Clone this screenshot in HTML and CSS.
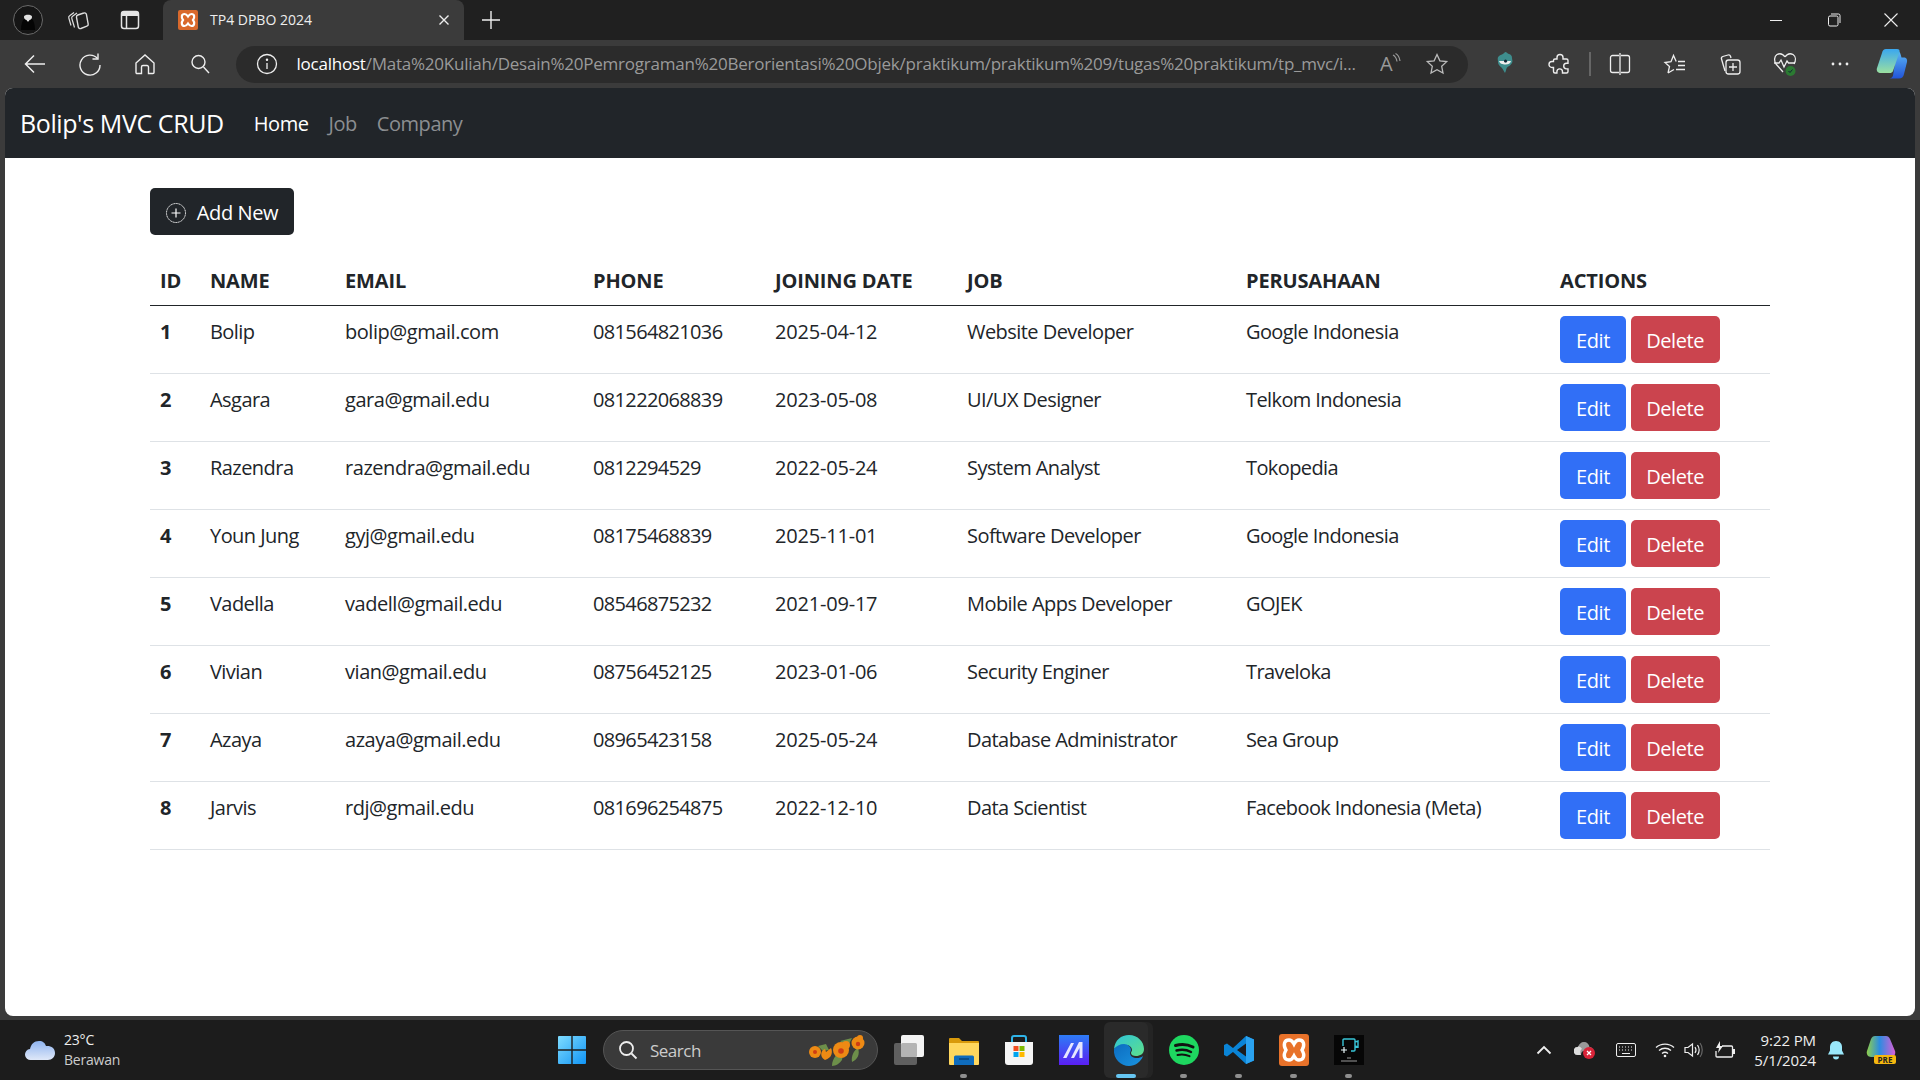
FILE: index.html
```html
<!DOCTYPE html>
<html lang="en">
<head>
    <meta charset="UTF-8">
    <meta name="viewport" content="width=device-width, initial-scale=1.0">
    <title>TP4 DPBO 2024</title>
    <link rel="stylesheet" href="styles.css">
</head>
<body>
    <!-- Browser tab strip -->
    <div class="tabstrip">
        <span class="avatar">
            <svg width="30" height="30" viewBox="0 0 30 30"><circle cx="15" cy="15" r="14.500" fill="#151515" stroke="#6a6a6a" stroke-width="1"/><path d="M8 25c0-5 1-9 3-11h8c2 2 3 6 3 11z" fill="#050505"/><path d="M11 11.500c.5-2.500 7.500-2.500 8 0 .3 2-1.500 3.500-2.500 3.500l-1 1.500h-1l-1-1.500c-1 0-2.800-1.500-2.500-3.500z" fill="#e2e2e2"/></svg>
        </span>
        <span class="strip-btn">
            <svg width="24" height="24" viewBox="0 0 24 24" fill="none" stroke="#ddd" stroke-width="1.200"><path d="M5 17.500 2.800 10a2 2 0 0 1 .8-2.300L8 4.500"/><path d="M8.500 19.500 5.800 10.500a2 2 0 0 1 .8-2.300L11 5"/><path d="M10.500 9.300a2 2 0 0 1 1.300-2.300l6-2a2 2 0 0 1 2.600 1.300l1.800 9.700a2 2 0 0 1-1.300 2.200l-6 2.300a2 2 0 0 1-2.600-1.400z" stroke-width="1.400"/></svg>
        </span>
        <span class="strip-btn">
            <svg width="24" height="24" viewBox="0 0 24 24" fill="none" stroke="#e4e4e4" stroke-width="1.500"><rect x="3.500" y="3.500" width="17" height="17" rx="2.500"/><path d="M3.500 5.500a2 2 0 0 1 2-2h13a2 2 0 0 1 2 2v2.500h-17z" fill="#e4e4e4" stroke="none"/><path d="M8.500 8v12.500"/></svg>
        </span>
        <div class="tab">
            <svg class="favicon" width="20" height="20" viewBox="0 0 20 20"><rect width="20" height="20" rx="2" fill="#d9692c"/><path d="M6.500 4c-3 0-3.500 3.300-1.500 6-2 2.700-1.500 6 1.500 6 1.700 0 2.700-1.300 3.500-2.500.8 1.200 1.800 2.500 3.500 2.500 3 0 3.500-3.300 1.500-6 2-2.700 1.500-6-1.500-6-1.700 0-2.700 1.300-3.500 2.500C9.200 5.300 8.200 4 6.500 4z" fill="none" stroke="#fff" stroke-width="2.200"/></svg>
            <span class="tab-title">TP4 DPBO 2024</span>
            <svg class="tab-close" width="12" height="12" viewBox="0 0 12 12" stroke="#eee" stroke-width="1.400"><path d="M1.500 1.500l9 9M10.500 1.500l-9 9"/></svg>
        </div>
        <svg class="new-tab" width="20" height="20" viewBox="0 0 20 20" stroke="#eee" stroke-width="1.400"><path d="M10 1v18M1 10h18"/></svg>
        <div class="window-btns">
            <svg width="14" height="14" viewBox="0 0 14 14" stroke="#eee"><path d="M1 7.500h12"/></svg>
            <svg width="14" height="14" viewBox="0 0 14 14" fill="none" stroke="#eee"><rect x="1.500" y="3" width="9.500" height="10" rx="1.500"/><path d="M4 1h7.500A1.500 1.500 0 0 1 13 2.500V10"/></svg>
            <svg width="14" height="14" viewBox="0 0 14 14" stroke="#eee" stroke-width="1.100"><path d="M.5.500l13 13M13.500.500l-13 13"/></svg>
        </div>
    </div>

    <!-- Address bar and toolbar -->
    <div class="toolbar">
        <span class="tool-btn">
            <svg width="24" height="24" viewBox="0 0 24 24" fill="none" stroke="#eee" stroke-width="1.500"><path d="M22 12H3M11 3.500 2.500 12l8.500 8.500"/></svg>
        </span>
        <span class="tool-btn">
            <svg width="24" height="24" viewBox="0 0 24 24" fill="none" stroke="#eee" stroke-width="1.400"><path d="M19.500 6.500A10 10 0 1 0 22 13"/><path d="M20 1.500v5.500h-5.500"/></svg>
        </span>
        <span class="tool-btn">
            <svg width="24" height="24" viewBox="0 0 24 24" fill="none" stroke="#eee" stroke-width="1.400"><path d="M3 11 12 3l9 8v9.500a1 1 0 0 1-1 1h-4.500V15a1.500 1.500 0 0 0-1.500-1.500h-4A1.500 1.500 0 0 0 8.500 15v6.500H4a1 1 0 0 1-1-1z"/></svg>
        </span>
        <span class="tool-btn">
            <svg width="22" height="22" viewBox="0 0 22 22" fill="none" stroke="#eee" stroke-width="1.400"><circle cx="9.500" cy="9" r="6.500"/><path d="M14.500 14l5.500 6"/></svg>
        </span>
        <div class="addressbar">
            <svg width="22" height="22" viewBox="0 0 22 22" fill="none" stroke="#eee" stroke-width="1.300"><circle cx="11" cy="11" r="9.500"/><path d="M11 10v6"/><circle cx="11" cy="6.800" r=".6" fill="#eee"/></svg>
            <span class="url"><span class="url-host">localhost</span>/Mata%20Kuliah/Desain%20Pemrograman%20Berorientasi%20Objek/praktikum/praktikum%209/tugas%20praktikum/tp_mvc/i...</span>
            <svg class="read-aloud" width="30" height="30" viewBox="0 0 30 30" fill="none" stroke="#999" stroke-width="1.200"><text x="0" y="22" font-family="Open Sans" font-size="20" fill="#999" stroke="none">A</text><path d="M13 6c2.500 1.300 3.500 3.500 4 6.500M15.500 4.500c3 1.500 4 4 4.500 7.500"/></svg>
            <svg width="24" height="24" viewBox="0 0 24 24" fill="none" stroke="#bbb" stroke-width="1.300"><path d="M12 2.500l2.900 6.300 6.800.8-5 4.700 1.300 6.800-6-3.400-6 3.400 1.300-6.800-5-4.700 6.800-.8z"/></svg>
        </div>
        <span class="tool-btn first-ext">
            <svg width="20" height="26" viewBox="0 0 20 26"><path d="M10 1c2 0 2 1.500 4 2 2 .5 3 2 3 4s1 3 0 5-3 3-4.500 4-1 3-2.500 6c-1.500-2-2-4-3.500-5.500S3 14 3 11s-1-4 1-6 4-1 6-4z" fill="#3e8d8d"/><path d="M4 10h5a1.800 1.800 0 0 0 3.500 0H16c-.5 2.500-2.500 3.500-5.500 3.500S4.500 12.500 4 10z" fill="#eee"/><circle cx="10.500" cy="10" r="1.500" fill="#123"/></svg>
        </span>
        <span class="tool-btn">
            <svg width="24" height="24" viewBox="0 0 24 24" fill="none" stroke="#eee" stroke-width="1.400"><path d="M9 5.500a3 3 0 0 1 6 0V7h3.500a1.500 1.500 0 0 1 1.500 1.500v2.800h-1.500a2.800 2.800 0 0 0 0 5.600H20v2.600a1.500 1.500 0 0 1-1.500 1.500h-4v-1.300a2.800 2.800 0 0 0-5.600 0v1.300H7a1.500 1.500 0 0 1-1.500-1.500v-4H4a3 3 0 0 1 0-6h1.500V8.500A1.500 1.500 0 0 1 7 7h2z"/></svg>
        </span>
        <span class="tool-divider"></span>
        <span class="tool-btn">
            <svg width="24" height="24" viewBox="0 0 24 24" fill="none" stroke="#eee" stroke-width="1.300"><path d="M11 3.500H4.500A2 2 0 0 0 2.500 5.500v13a2 2 0 0 0 2 2H11M13 3.500h6.500a2 2 0 0 1 2 2v13a2 2 0 0 1-2 2H13M12 1v22"/></svg>
        </span>
        <span class="tool-btn">
            <svg width="24" height="24" viewBox="0 0 24 24" fill="none" stroke="#eee" stroke-width="1.300"><path d="M5 21l1.500-6.500L2 10.500l6-.8L10.500 3.500l2.700 6M5 21l6-3.500"/><path d="M15 9.500h7M15 13.500h7M13 17.500h9"/></svg>
        </span>
        <span class="tool-btn">
            <svg width="24" height="24" viewBox="0 0 24 24" fill="none" stroke="#eee" stroke-width="1.300"><path d="M7 19 3.500 7a2 2 0 0 1 1.300-2.500L10 3a2 2 0 0 1 2.500 1.300L13 6"/><rect x="8" y="8" width="14" height="14" rx="2.500"/><path d="M15 11v8M11 15h8"/></svg>
        </span>
        <span class="tool-btn">
            <svg width="26" height="26" viewBox="0 0 26 26" fill="none" stroke="#eee" stroke-width="1.300"><path d="M13 6c-2-3-5-4-8-2.500C2 5.500 2 10 4 13l7 8"/><path d="M13 6c2-3 5-4 8-2.500 3 2 3 6 1 9.500"/><path d="M2 12h5l2-3 3 7 3-6 1.500 2H23"/><circle cx="18.500" cy="20" r="5" fill="#2b7a32" stroke="none"/><path d="M16.500 20l1.500 1.500 2.500-3" stroke="#123" stroke-width="1"/></svg>
        </span>
        <span class="tool-btn">
            <svg width="18" height="6" viewBox="0 0 18 6" fill="#eee"><circle cx="2" cy="3" r="1.400"/><circle cx="9" cy="3" r="1.400"/><circle cx="16" cy="3" r="1.400"/></svg>
        </span>
        <span class="tool-copilot">
            <svg width="32" height="32" viewBox="0 0 32 32">
                <defs>
                    <linearGradient id="cp1" x1="0" y1="0" x2="0" y2="1"><stop offset="0" stop-color="#3aa7f0"/><stop offset="1" stop-color="#9be0a0"/></linearGradient>
                    <linearGradient id="cp2" x1="0" y1="0" x2="0" y2="1"><stop offset="0" stop-color="#5cb8f5"/><stop offset="1" stop-color="#2254d8"/></linearGradient>
                </defs>
                <path d="M21 3c2 0 3 1 3.500 3l1 3.500h2c3 0 4 2 3.500 4.500l-3 12c-.5 3-2.500 4.500-5 4.500H13c2 0 3.500-1 4-3z" fill="url(#cp2)"/>
                <path d="M10 1h11c2 0 3 1 2.500 3L17 23c-.5 1.500-2 2-3 2H5c-3 0-5-2-4-5l5-15c.5-2.500 2-4 4-4z" fill="url(#cp1)"/>
            </svg>
        </span>
    </div>

    <!-- The page itself -->
    <div class="page-frame">
        <div class="page">
            <nav class="navbar">
                <a class="navbar-brand">Bolip's MVC CRUD</a>
                <a class="nav-link active">Home</a>
                <a class="nav-link">Job</a>
                <a class="nav-link">Company</a>
            </nav>
            <main class="content">
                <a class="btn btn-dark">
                    <svg width="20" height="20" viewBox="0 0 20 20" fill="none" stroke="#fff"><circle cx="10" cy="10" r="9.500" stroke-dasharray="1.200 .5"/><path d="M10 5.500v9M5.500 10h9" stroke-width="1.200"/></svg>
                    Add New
                </a>
                <table class="table">
                    <thead>
                        <tr>
                            <th>ID</th>
                            <th>NAME</th>
                            <th>EMAIL</th>
                            <th>PHONE</th>
                            <th>JOINING DATE</th>
                            <th>JOB</th>
                            <th>PERUSAHAAN</th>
                            <th>ACTIONS</th>
                        </tr>
                    </thead>
                    <tbody>
                        <tr>
                            <th>1</th><td>Bolip</td><td>bolip@gmail.com</td><td>081564821036</td><td>2025-04-12</td><td>Website Developer</td><td>Google Indonesia</td>
                            <td><a class="btn btn-primary">Edit</a> <a class="btn btn-danger">Delete</a></td>
                        </tr>
                        <tr>
                            <th>2</th><td>Asgara</td><td>gara@gmail.edu</td><td>081222068839</td><td>2023-05-08</td><td>UI/UX Designer</td><td>Telkom Indonesia</td>
                            <td><a class="btn btn-primary">Edit</a> <a class="btn btn-danger">Delete</a></td>
                        </tr>
                        <tr>
                            <th>3</th><td>Razendra</td><td>razendra@gmail.edu</td><td>0812294529</td><td>2022-05-24</td><td>System Analyst</td><td>Tokopedia</td>
                            <td><a class="btn btn-primary">Edit</a> <a class="btn btn-danger">Delete</a></td>
                        </tr>
                        <tr>
                            <th>4</th><td>Youn Jung</td><td>gyj@gmail.edu</td><td>08175468839</td><td>2025-11-01</td><td>Software Developer</td><td>Google Indonesia</td>
                            <td><a class="btn btn-primary">Edit</a> <a class="btn btn-danger">Delete</a></td>
                        </tr>
                        <tr>
                            <th>5</th><td>Vadella</td><td>vadell@gmail.edu</td><td>08546875232</td><td>2021-09-17</td><td>Mobile Apps Developer</td><td>GOJEK</td>
                            <td><a class="btn btn-primary">Edit</a> <a class="btn btn-danger">Delete</a></td>
                        </tr>
                        <tr>
                            <th>6</th><td>Vivian</td><td>vian@gmail.edu</td><td>08756452125</td><td>2023-01-06</td><td>Security Enginer</td><td>Traveloka</td>
                            <td><a class="btn btn-primary">Edit</a> <a class="btn btn-danger">Delete</a></td>
                        </tr>
                        <tr>
                            <th>7</th><td>Azaya</td><td>azaya@gmail.edu</td><td>08965423158</td><td>2025-05-24</td><td>Database Administrator</td><td>Sea Group</td>
                            <td><a class="btn btn-primary">Edit</a> <a class="btn btn-danger">Delete</a></td>
                        </tr>
                        <tr>
                            <th>8</th><td>Jarvis</td><td>rdj@gmail.edu</td><td>081696254875</td><td>2022-12-10</td><td>Data Scientist</td><td>Facebook Indonesia (Meta)</td>
                            <td><a class="btn btn-primary">Edit</a> <a class="btn btn-danger">Delete</a></td>
                        </tr>
                    </tbody>
                </table>
            </main>
        </div>
    </div>

    <!-- Windows taskbar -->
    <footer class="taskbar">
        <div class="weather">
            <svg width="32" height="26" viewBox="0 0 32 26">
                <defs><linearGradient id="cloud" x1="0" y1="0" x2="0" y2="1"><stop offset="0" stop-color="#8fb4f0"/><stop offset="1" stop-color="#dfe8f8"/></linearGradient></defs>
                <path d="M7 23a5.500 5.500 0 0 1-1-11c1-5 4-8 9-8 4 0 6 2 7 5 5-.5 9 2 9 7 0 4-3 7-7 7z" fill="url(#cloud)"/>
            </svg>
            <div class="weather-text">
                <span>23°C</span>
                <span class="weather-label">Berawan</span>
            </div>
        </div>
        <div class="task-center">
            <span class="task-start">
                <svg width="30" height="30" viewBox="0 0 30 30">
                    <defs><linearGradient id="win" x1="0" y1="0" x2="1" y2="1"><stop offset="0" stop-color="#7fdcff"/><stop offset="1" stop-color="#1094f5"/></linearGradient></defs>
                    <path d="M1 2a1 1 0 0 1 1-1h12.300v13.300H1zM15.700 1H28a1 1 0 0 1 1 1v12.300H15.700zM1 15.700h13.300V29H2a1 1 0 0 1-1-1zM15.700 15.700H29V28a1 1 0 0 1-1 1H15.700z" fill="url(#win)"/>
                </svg>
            </span>
            <div class="search-pill">
                <svg width="20" height="20" viewBox="0 0 20 20" fill="none" stroke="#eee" stroke-width="1.800"><circle cx="8.500" cy="8.500" r="6.500"/><path d="M13.500 13.500l5 5"/></svg>
                <span class="search-text">Search</span>
                <svg class="flowers" width="58" height="36" viewBox="0 0 58 36">
                    <g fill="#6d8f4a"><path d="M10 14l8-2 3 6-6 1zM24 34c0-8 6-14 12-16l-2 10c-2 3-6 6-10 6zM32 9l12-3-4 8zM44 30c-1-6 2-12 6-14 2 6 0 11-6 14z"/></g>
                    <g fill="#ee8a14">
                        <circle cx="7" cy="20" r="6"/><path d="M17 28c-4-2-5-7-2-10l2-1 1 3 5-4c2 4 1 10-6 12z"/>
                        <circle cx="33" cy="18" r="8"/><circle cx="38" cy="13" r="4"/><circle cx="50" cy="11" r="6.500"/><circle cx="52" cy="6" r="3"/>
                    </g>
                    <g fill="#cf3d14"><circle cx="7" cy="20" r="2"/><circle cx="33" cy="19" r="2.800"/><circle cx="50" cy="12" r="2.200"/></g>
                </svg>
            </div>
            <span class="task-app">
                <svg width="30" height="30" viewBox="0 0 30 30"><rect x="0" y="8" width="23" height="22" rx="2" fill="#5f5f5f"/><rect x="7" y="0" width="23" height="22" rx="2" fill="#f3f3f3"/><rect x="7" y="8" width="16" height="14" rx="1.500" fill="#b4b4b4"/></svg>
            </span>
            <span class="task-app running">
                <svg width="30" height="30" viewBox="0 0 30 30"><path d="M0 4a1 1 0 0 1 1-1h9l3 3h16a1 1 0 0 1 1 1v3H0z" fill="#d99a0b"/><path d="M0 8h30v21a1 1 0 0 1-1 1H1a1 1 0 0 1-1-1z" fill="#ffd75e"/><path d="M5 22a1.500 1.500 0 0 1 1.500-1.500h17A1.500 1.500 0 0 1 25 22v8H5z" fill="#0f6cbd"/><path d="M10 24h10" stroke="#063b6a" stroke-width="1.200"/></svg>
            </span>
            <span class="task-app">
                <svg width="30" height="32" viewBox="0 0 30 32"><path d="M8 8V4a2 2 0 0 1 2-2h10a2 2 0 0 1 2 2v4" fill="none" stroke="#2fb4e8" stroke-width="2"/><path d="M1 8h28v20a3 3 0 0 1-3 3H4a3 3 0 0 1-3-3z" fill="#f5f5f5"/><rect x="9.500" y="12" width="5" height="5" fill="#f25022"/><rect x="15.500" y="12" width="5" height="5" fill="#7fba00"/><rect x="9.500" y="18" width="5" height="5" fill="#00a4ef"/><rect x="15.500" y="18" width="5" height="5" fill="#ffb900"/></svg>
            </span>
            <span class="task-app">
                <svg width="30" height="30" viewBox="0 0 30 30"><defs><linearGradient id="mapp" x1="0" y1="0" x2="0" y2="1"><stop offset="0" stop-color="#2d7cf6"/><stop offset="1" stop-color="#5a1ff2"/></linearGradient></defs><rect width="30" height="30" fill="url(#mapp)"/><path d="M4 23 12 8h3L7.500 23zM12 23 20 7h3.500v16h-3V13L15 23z" fill="#e6e6ff"/></svg>
            </span>
            <span class="task-app active">
                <svg width="32" height="32" viewBox="0 0 32 32">
                    <defs><linearGradient id="edge1" x1="0" y1="0" x2="1" y2="1"><stop offset="0" stop-color="#2ec4d8"/><stop offset="1" stop-color="#5fe08a"/></linearGradient><linearGradient id="edge2" x1="0" y1="0" x2="1" y2="1"><stop offset="0" stop-color="#0c6cc0"/><stop offset="1" stop-color="#1a94e0"/></linearGradient></defs>
                    <path d="M1 15C2 6 8 1 16 1c9 0 15 7 15 14 0 5-4 7-8 7-3 0-5-1-5-3 0-1 1-2 1-3 0-3-3-5-6-5-6 0-11 3-12 4z" fill="url(#edge1)"/>
                    <path d="M1 15c2-3 6-5 10-5 4 0 7 3 7 6 0 1-1 2-1 3 0 3 3 5 7 5 2 0 4-.5 6-2-2 6-8 10-14 10C8 32 0 25 1 15z" fill="url(#edge2)"/>
                </svg>
            </span>
            <span class="task-app running">
                <svg width="30" height="30" viewBox="0 0 30 30" fill="none" stroke="#111"><circle cx="15" cy="15" r="15" fill="#1ed760" stroke="none"/><path d="M6.500 10.500c6-1.800 12-1.300 17.500 1.500" stroke-width="3" stroke-linecap="round"/><path d="M7.500 15.500c5-1.400 10-1 14.500 1.500" stroke-width="2.400" stroke-linecap="round"/><path d="M8.500 20c4-1 8-.7 12 1.200" stroke-width="2" stroke-linecap="round"/></svg>
            </span>
            <span class="task-app running">
                <svg width="30" height="30" viewBox="0 0 30 30"><path d="M22 1 9 13 3 8.500 0 10v10l3 1.500L9 17l13 12 8-3.500v-21zM22 8.500v13L13 15z" fill="#0a84d6" fill-rule="evenodd"/><path d="M22 1l8 3.500v21L22 29z" fill="#2aa2ef"/></svg>
            </span>
            <span class="task-app running">
                <svg width="30" height="32" viewBox="0 0 30 32"><rect width="30" height="32" rx="3" fill="#e8722a"/><path d="M10 6c-5 0-6 5-3 10-3 5-2 10 3 10 2.500 0 4-2 5-4 1 2 2.500 4 5 4 5 0 6-5 3-10 3-5 2-10-3-10-2.500 0-4 2-5 4-1-2-2.500-4-5-4z" fill="none" stroke="#fff" stroke-width="3.400"/></svg>
            </span>
            <span class="task-app running">
                <svg width="30" height="30" viewBox="0 0 30 30" fill="none"><rect width="30" height="30" fill="#060606"/><path d="M9 11V5a1 1 0 0 1 1-1h10a1 1 0 0 1 1 1v10a1 1 0 0 1-1 1h-3M21 7l3-1v6l-3-1" stroke="#39c6d8" stroke-width="1.400"/><path d="M7 15h6M10 12v6" stroke="#e8f6f8" stroke-width="1.200"/><path d="M13 23h4M7 26h16" stroke="#9a9a9a"/></svg>
            </span>
        </div>
        <div class="tray">
            <svg class="tray-chevron" width="16" height="10" viewBox="0 0 16 10" fill="none" stroke="#eee" stroke-width="1.800"><path d="M1.500 8.500 8 2l6.500 6.500"/></svg>
            <span class="tray-onedrive">
                <svg width="22" height="18" viewBox="0 0 22 18"><path d="M4 14a4 4 0 0 1 0-8c1-3 3-5 6-5 3 0 5 2 5.500 5 2 0 4 2 4 4H10c-2 0-3 2-3 4z" fill="#999"/><path d="M4 14a4 4 0 0 1-.5-8C5 5 7 6 8 8c-2 1-2 4-1 6z" fill="#ddd"/><circle cx="15" cy="12" r="6" fill="#d92338"/><path d="M13 10l4 4M17 10l-4 4" stroke="#fff" stroke-width="1.300"/></svg>
            </span>
            <svg class="tray-keyboard" width="20" height="14" viewBox="0 0 20 14" fill="none" stroke="#eee" stroke-width="1"><rect x=".5" y=".5" width="19" height="13" rx="1.500"/><path d="M3 4h1m2 0h1m2 0h1m2 0h1m2 0h1M3 7h1m2 0h1m2 0h1m2 0h1m2 0h1M6 10.500h8" stroke-width="1.200"/></svg>
            <svg class="tray-wifi" width="20" height="16" viewBox="0 0 20 16" fill="none" stroke="#eee" stroke-width="1.300"><path d="M1 5.500c5-4.500 13-4.500 18 0M4 8.500c3.500-3 8.500-3 12 0M7 11.500c1.800-1.500 4.200-1.500 6 0"/><circle cx="10" cy="14" r="1.300" fill="#eee" stroke="none"/></svg>
            <svg class="tray-volume" width="20" height="16" viewBox="0 0 20 16" fill="none" stroke="#eee" stroke-width="1.200"><path d="M1 5.500h3L8.500 2v12L4 10.500H1z"/><path d="M11 5c1.200 1.800 1.200 4.200 0 6M13.500 3c2 3 2 7 0 10"/><path d="M16 1c3 4 3 10 0 14" stroke="#666"/></svg>
            <svg class="tray-battery" width="20" height="18" viewBox="0 0 20 18" fill="none"><path d="M7 5h9.500a1 1 0 0 1 1 1v9a1 1 0 0 1-1 1H2a1 1 0 0 1-1-1V10" stroke="#eee" stroke-width="1.300"/><path d="M18 8h2v5h-2z" fill="#eee"/><path d="M5 0 1 7h3l-1 5 5-7H5z" fill="#eee"/></svg>
            <div class="clock">
                <span>9:22 PM</span>
                <span>5/1/2024</span>
            </div>
            <svg class="tray-bell" width="18" height="20" viewBox="0 0 18 20"><path d="M9 1C5 1 3 4 3 7v3.500L1 14.500h16l-2-4V7c0-3-2-6-6-6z" fill="#9ae8fb"/><path d="M6 16.500h6a3 3 0 0 1-6 0z" fill="#9ae8fb"/></svg>
            <span class="tray-copilot">
                <svg width="30" height="30" viewBox="0 0 30 30">
                    <defs><linearGradient id="cpre" x1="0" y1="0" x2="1" y2="0"><stop offset="0" stop-color="#8fcf4a"/><stop offset=".45" stop-color="#2c8ce0"/><stop offset="1" stop-color="#d860d8"/></linearGradient></defs>
                    <path d="M9 1h11c2 0 3 1 4 3l5 12c1 3-1 6-4 6H5c-3 0-5-3-4-6L5 4c1-2 2-3 4-3z" fill="url(#cpre)"/>
                    <rect x="8" y="20" width="22" height="9" rx="2" fill="#f5b70f"/>
                    <text x="19" y="27.500" font-family="Open Sans" font-size="8" font-weight="700" text-anchor="middle" fill="#222">PRE</text>
                </svg>
            </span>
        </div>
    </footer>
</body>
</html>
```

FILE: styles.css
```css
/* Basic Styles */
* {
    box-sizing: border-box;
}

body {
    margin: 0;
    width: 1920px;
    height: 1080px;
    display: flex;
    flex-direction: column;
    overflow: hidden;
    font-family: "Open Sans", "Noto Sans", sans-serif;
    background: #1c1c1c;
}

/* Tab strip */
.tabstrip {
    height: 40px;
    display: flex;
    align-items: center;
    background: #202020;
    color: #eee;
}

.avatar {
    width: 30px;
    margin-left: 13px;
    display: flex;
}

.strip-btn {
    width: 52px;
    display: flex;
    justify-content: center;
}

.strip-btn:nth-child(2) {
    margin-left: 9px;
}

.tab {
    width: 301px;
    height: 40px;
    margin-left: 7px;
    padding: 0 14px 0 15px;
    display: flex;
    align-items: center;
    background: #3b3b3b;
    border-radius: 8px 8px 0 0;
}

.tab-title {
    margin-left: 12px;
    padding-bottom: 2px;
    font-size: 14px;
    flex: 1;
}

.new-tab {
    margin-left: 17px;
}

.window-btns {
    margin-left: auto;
    width: 151px;
    padding-right: 22px;
    display: flex;
    justify-content: space-between;
}

/* Toolbar */
.toolbar {
    height: 48px;
    display: flex;
    align-items: center;
    padding-left: 7.5px;
    background: #3b3b3b;
}

.tool-btn {
    width: 55px;
    display: flex;
    justify-content: center;
    flex-shrink: 0;
}

.first-ext {
    margin-left: 10px;
}

.tool-divider {
    width: 2px;
    height: 24px;
    margin: 0 2px 0 1px;
    background: #666;
    flex-shrink: 0;
}

.tool-copilot {
    width: 32px;
    margin-left: 8px;
    display: flex;
}

.addressbar {
    width: 1232px;
    height: 37px;
    margin-left: 8px;
    padding: 0 13px 0 20px;
    display: flex;
    align-items: center;
    background: #2b2b2b;
    border-radius: 19px;
    flex-shrink: 0;
}

.url {
    margin-left: 19px;
    padding-bottom: 2px;
    width: 1068px;
    font-size: 17px;
    letter-spacing: -0.23px;
    color: #9a9a9a;
    white-space: nowrap;
}

.url-host {
    color: #fff;
}

.read-aloud {
    margin: 0 15px 0 15px;
}

/* Page */
.page-frame {
    height: 932px;
    padding: 0 5px 4px;
    background: #3b3b3b;
}

.page {
    height: 100%;
    background: #fff;
    border-radius: 8px;
    overflow: hidden;
    color: #212529;
}

.navbar {
    height: 70px;
    padding-left: 15px;
    display: flex;
    align-items: center;
    background: #212529;
}

.navbar-brand {
    margin-right: 20px;
    font-size: 25px;
    letter-spacing: -0.4px;
    color: #fff;
}

.nav-link {
    padding: 0 10px;
    font-size: 20px;
    letter-spacing: -0.45px;
    color: #8b8e91;
}

.nav-link.active {
    color: #fff;
}

.content {
    padding: 30px 145px 0;
}

/* Buttons */
.btn {
    display: inline-flex;
    align-items: center;
    justify-content: center;
    height: 47px;
    padding-top: 2px;
    font-size: 20px;
    letter-spacing: -0.4px;
    line-height: 30px;
    color: #fff;
    border-radius: 5px;
    vertical-align: top;
}

.btn-dark {
    width: 144px;
    background: #212529;
    gap: 11px;
}

.btn-primary {
    width: 66px;
    background: #316ff6;
}

.btn-danger {
    width: 89px;
    background: #cb444e;
}

/* Table */
.table {
    width: 1620px;
    margin-top: 20px;
    border-collapse: collapse;
    table-layout: fixed;
    font-size: 20px;
    line-height: 30px;
    letter-spacing: -0.55px;
}

.table th,
.table td {
    padding: 11px 10px 9px;
    text-align: left;
    vertical-align: top;
    border-bottom: 1px solid #dee2e6;
    white-space: nowrap;
}

.table td:last-child {
    padding: 10px;
}

.table th {
    font-weight: 700;
}

.table thead th {
    letter-spacing: -0.15px;
    border-bottom: 1px solid #212529;
}

.table td:nth-child(3) { letter-spacing: -0.45px; }
.table td:nth-child(4) { letter-spacing: -0.65px; }
.table td:nth-child(5) { letter-spacing: -0.2px; }
.table td:nth-child(7) { letter-spacing: -0.6px; }

.table thead th:nth-child(1) { width: 50px; }
.table thead th:nth-child(2) { width: 135px; }
.table thead th:nth-child(3) { width: 248px; }
.table thead th:nth-child(4) { width: 182px; }
.table thead th:nth-child(5) { width: 192px; }
.table thead th:nth-child(6) { width: 279px; }
.table thead th:nth-child(7) { width: 314px; }
.table thead th:nth-child(8) { width: 220px; }

/* Taskbar */
.taskbar {
    height: 60px;
    display: flex;
    align-items: center;
    background: #1c1c1c;
    color: #eee;
    position: relative;
}

.weather {
    width: 555px;
    padding-left: 24px;
    display: flex;
    align-items: center;
    gap: 8px;
    flex-shrink: 0;
}

.weather-text {
    display: flex;
    flex-direction: column;
    font-size: 14px;
    line-height: 20px;
    letter-spacing: -0.2px;
}

.weather-label {
    color: #ccc;
}

.task-center {
    display: flex;
    align-items: center;
}

.task-start {
    width: 30px;
    margin: 0 15px 0 2px;
    display: flex;
}

.search-pill {
    width: 275px;
    height: 40px;
    margin-left: 1px;
    padding: 0 11px 0 14px;
    display: flex;
    align-items: center;
    background: #3a3a3a;
    border: 1px solid #555;
    border-radius: 20px;
    margin-right: 3px;
}

.search-text {
    margin-left: 12px;
    font-size: 17px;
    letter-spacing: -0.5px;
    color: #ccc;
    flex: 1;
}

.task-app {
    width: 55px;
    height: 56px;
    display: flex;
    align-items: center;
    justify-content: center;
    position: relative;
}

.task-app svg {
    position: relative;
}

.task-app.active::before {
    content: "";
    position: absolute;
    top: 0;
    bottom: 0;
    left: 3px;
    right: 8px;
    background: #2a2a2a;
    border-radius: 6px;
    box-shadow: 5px 0 0 #242424;
}

.task-app.running::after,
.task-app.active::after {
    content: "";
    position: absolute;
    left: 24px;
    bottom: 0;
    width: 7px;
    height: 4px;
    border-radius: 2px;
    background: #8f8f8f;
}

.task-app.active::after {
    left: 15px;
    width: 20px;
    background: #66c6f2;
}

.tray {
    position: absolute;
    right: 0;
    top: 0;
    height: 60px;
    width: 384px;
    display: flex;
    align-items: center;
}

.tray-onedrive { margin-left: 22px; display: flex; }
.tray-keyboard { margin-left: 20px; }
.tray-wifi { margin-left: 19px; }
.tray-volume { margin-left: 9px; }
.tray-battery { margin-left: 11px; }

.clock {
    width: 81px;
    display: flex;
    flex-direction: column;
    align-items: flex-end;
    font-size: 15px;
    line-height: 20px;
    letter-spacing: -0.1px;
}

.tray-bell { margin-left: 11px; }
.tray-copilot { margin-left: 21px; display: flex; }
```
